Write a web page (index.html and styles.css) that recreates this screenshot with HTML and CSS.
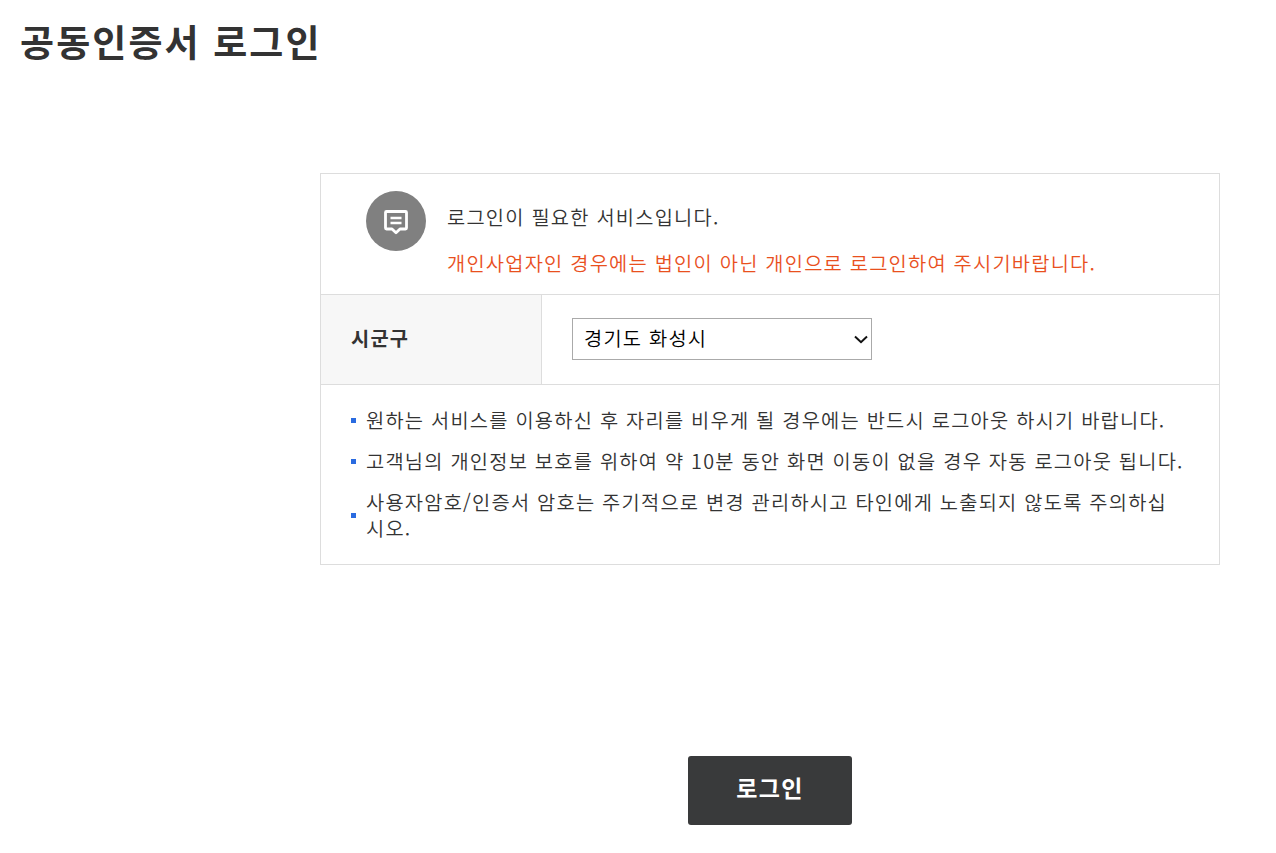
FILE: index.html
```html
<!DOCTYPE html>
<html lang="ko">
<head>
    <meta charset="UTF-8">
    <meta name="viewport" content="width=device-width, initial-scale=1.0">
    <title>공동인증서 로그인</title>
    <link rel="stylesheet" href="styles.css">
</head>
<body>
    <h1>공동인증서 로그인</h1>

    <form class="login-form">
        <div class="login-box">
            <div class="notice">
                <svg class="notice-icon" viewBox="0 0 60 60">
                    <circle cx="30" cy="30" r="30" fill="#808080"/>
                    <path d="M20.500 20.500h19a1 1 0 0 1 1 1V37a1 1 0 0 1-1 1H34L30 41.800 26 38h-5.500a1 1 0 0 1-1-1V21.500a1 1 0 0 1 1-1z" fill="none" stroke="#fff" stroke-width="2.800" stroke-linejoin="round"/>
                    <path d="M24.500 27h11M24.500 32h11" stroke="#fff" stroke-width="2.400"/>
                </svg>
                <div class="notice-text">
                    <p>로그인이 필요한 서비스입니다.</p>
                    <p class="warn">개인사업자인 경우에는 법인이 아닌 개인으로 로그인하여 주시기바랍니다.</p>
                </div>
            </div>

            <div class="region-row">
                <label for="region">시군구</label>
                <div class="region-field">
                    <select id="region">
                        <option>경기도 화성시</option>
                    </select>
                    <svg class="arrow" viewBox="0 0 14 9"><path d="M1 1.500l6 5.700 6-5.700" fill="none" stroke="#111" stroke-width="2"/></svg>
                </div>
            </div>

            <ul class="guide">
                <li><p>원하는 서비스를 이용하신 후 자리를 비우게 될 경우에는 반드시 로그아웃 하시기 바랍니다.</p></li>
                <li><p>고객님의 개인정보 보호를 위하여 약 10분 동안 화면 이동이 없을 경우 자동 로그아웃 됩니다.</p></li>
                <li><p>사용자암호/인증서 암호는 주기적으로 변경 관리하시고 타인에게 노출되지 않도록 주의하십<br>시오.</p></li>
            </ul>
        </div>

        <button type="button" class="login-btn">로그인</button>
    </form>
</body>
</html>
```
FILE: styles.css
```css
* { margin: 0; padding: 0; box-sizing: border-box; }
body {
    padding: 13px 20px 0;
    background: #fff;
    color: #333;
    font-family: "Noto Sans CJK KR", sans-serif;
    font-size: 19.8px;
    font-weight: 350;
    letter-spacing: 1.22px;
}
h1 { font-size: 37px; line-height: 56px; letter-spacing: 2.1px; white-space: nowrap; }
.login-form { width: 900px; margin: 104px 0 0 300px; }
.login-box { border: 1px solid #ddd; }
.notice { display: flex; height: 120px; padding: 17px 0 0 45px; }
.notice-icon { width: 60px; height: 60px; }
.notice-text { margin-left: 21px; padding-top: 3px; }
.notice-text p { line-height: 46px; white-space: nowrap; }
.notice-text .warn { color: #e9501e; }
.region-row {
    display: flex;
    height: 91px;
    border-top: 1px solid #ddd;
    border-bottom: 1px solid #ddd;
}
.region-row label {
    width: 221px;
    padding-left: 30px;
    border-right: 1px solid #ddd;
    background: #f7f7f7;
    font-weight: bold;
    line-height: 86px;
}
.region-field { position: relative; padding: 23px 30px; }
select {
    width: 300px;
    height: 42px;
    padding: 0 0 3px 11px;
    border: 1px solid #aaa;
    border-radius: 0;
    background: #fff;
    color: #000;
    font: inherit;
    letter-spacing: inherit;
    appearance: none;
}
.arrow {
    position: absolute;
    top: 40px;
    right: 34px;
    width: 14px;
    height: 9px;
    pointer-events: none;
}
.guide { height: 179px; padding: 22px 30px 0; list-style: none; }
.guide li {
    display: flex;
    align-items: center;
    margin-bottom: 15px;
    line-height: 26px;
    white-space: nowrap;
}
.guide li::before {
    content: "";
    width: 5px;
    height: 5px;
    margin-right: 10px;
    background: #2a6be0;
}
.login-btn {
    display: block;
    width: 164px;
    height: 69px;
    margin: 191px auto 0;
    padding-bottom: 7px;
    border: 0;
    border-radius: 3px;
    background: #393a3b;
    color: #fff;
    font: bold 23px "Noto Sans CJK KR", sans-serif;
    letter-spacing: 1.4px;
}
```
